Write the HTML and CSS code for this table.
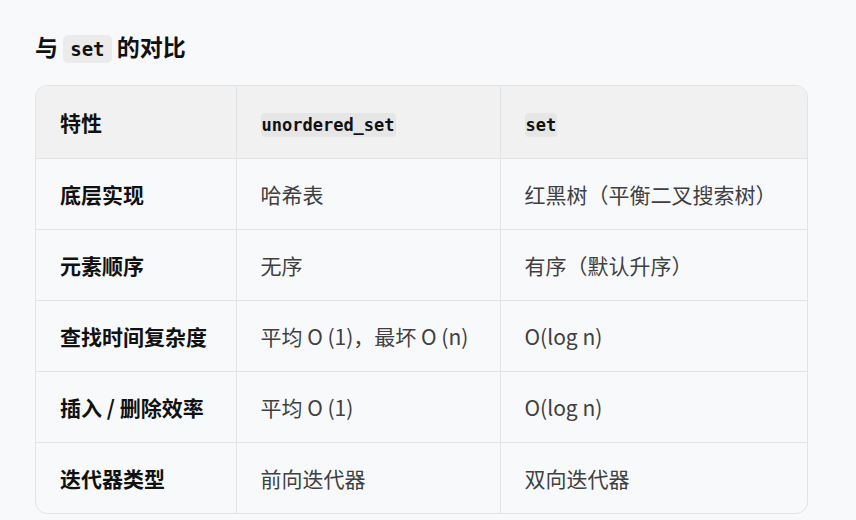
FILE: index.html
```html
<!DOCTYPE html>
<html lang="zh-CN">
<head>
<meta charset="utf-8">
<link rel="stylesheet" href="styles.css">
</head>
<body>
<div class="page">
  <h3 class="title">与 <code class="code">set</code> 的对比</h3>
  <div class="table-wrap">
    <table class="cmp">
      <thead>
        <tr>
          <th class="c1">特性</th>
          <th class="c2"><code class="code sm">unordered_set</code></th>
          <th class="c3"><code class="code sm">set</code></th>
        </tr>
      </thead>
      <tbody>
        <tr><td class="key">底层实现</td><td>哈希表</td><td>红黑树（平衡二叉搜索树）</td></tr>
        <tr><td class="key">元素顺序</td><td>无序</td><td>有序（默认升序）</td></tr>
        <tr><td class="key">查找时间复杂度</td><td>平均 O (1)，最坏 O (n)</td><td>O(log n)</td></tr>
        <tr><td class="key">插入 / 删除效率</td><td>平均 O (1)</td><td>O(log n)</td></tr>
        <tr><td class="key">迭代器类型</td><td>前向迭代器</td><td>双向迭代器</td></tr>
      </tbody>
    </table>
  </div>
</div>
</body>
</html>
```
FILE: styles.css
```css
html, body {
  margin: 0;
  padding: 0;
  background: #f8f9fb;
}
body {
  font-family: "Noto Sans CJK SC", "Noto Sans", sans-serif;
  color: #222;
}
.page {
  padding: 28px 48px 0 35px;
}
.title {
  margin: 0 0 18px 0;
  font-size: 23px;
  font-weight: 700;
  line-height: 36px;
  color: #111;
}
.code {
  font-family: "DejaVu Sans Mono", "Liberation Mono", monospace;
  background: #ebebeb;
  border-radius: 5px;
  padding: 3px 7px;
  font-size: 19px;
  font-weight: 700;
}
.code.sm {
  font-size: 17px;
  padding: 2px 1px;
  border-radius: 4px;
  background: #e6e6e6;
}
.table-wrap {
  border: 1px solid #e2e3e5;
  border-radius: 12px;
  overflow: hidden;
}
.cmp {
  width: 100%;
  border-collapse: collapse;
  table-layout: fixed;
}
.cmp th, .cmp td {
  box-sizing: border-box;
  text-align: left;
  padding: 0 0 0 24px;
  border-left: 1px solid #e2e3e5;
  border-top: 1px solid #e2e3e5;
  font-size: 21px;
  height: 71px;
}
.cmp th:first-child, .cmp td:first-child {
  border-left: none;
}
.cmp thead th {
  border-top: none;
  background: #f1f1f1;
  height: 72px;
  font-weight: 700;
  color: #111;
}
.cmp td {
  color: #404040;
  font-weight: 400;
}
.cmp td.key {
  font-weight: 700;
  color: #111;
}
.c1 { width: 200px; }
.c2 { width: 264px; }
```
